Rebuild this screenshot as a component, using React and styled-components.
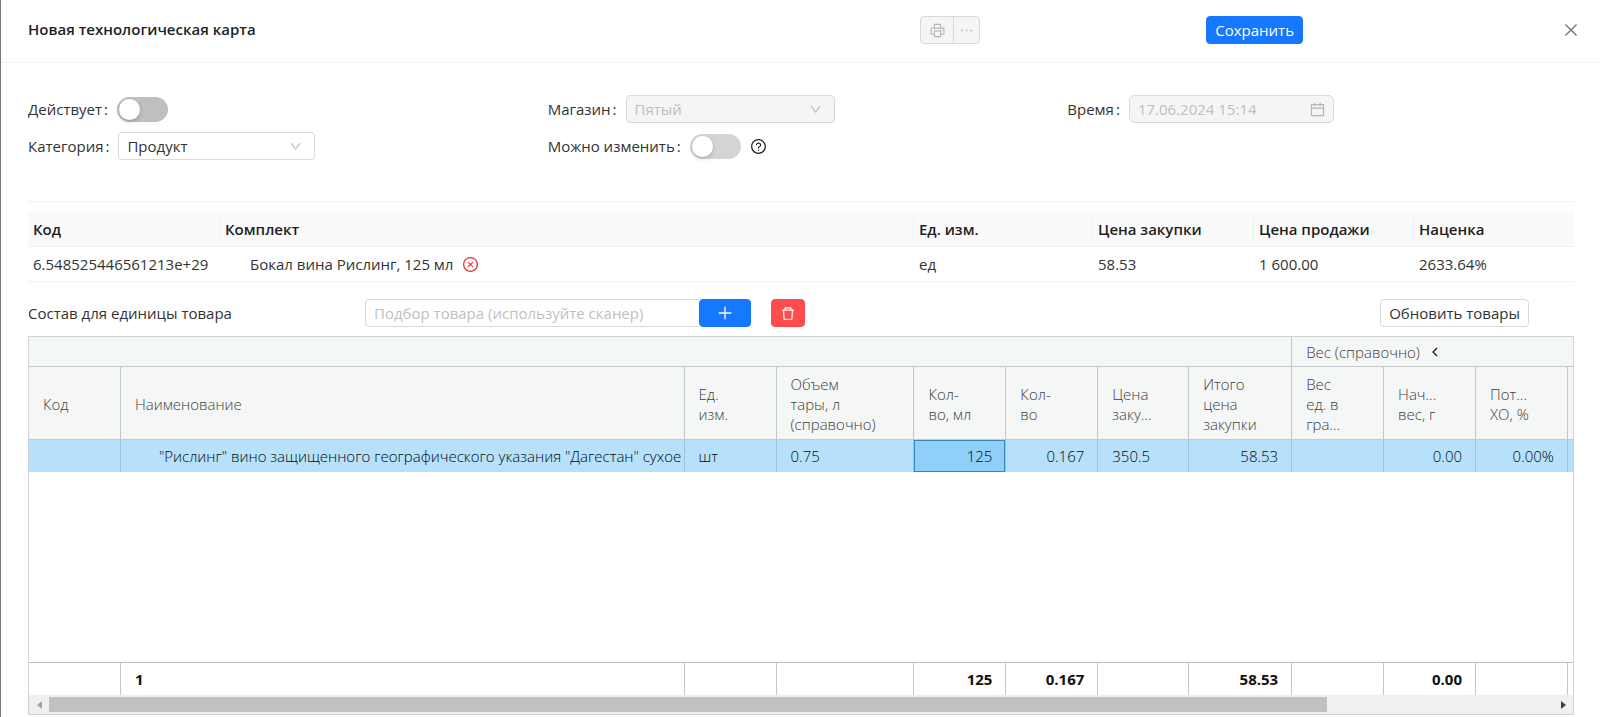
import React, { useState } from "react";
import styled, { createGlobalStyle } from "styled-components";
import {
  AiOutlineCalendar,
  AiOutlineClose,
  AiOutlineCloseCircle,
  AiOutlineDelete,
  AiOutlineDown,
  AiOutlineEllipsis,
  AiOutlinePlus,
  AiOutlinePrinter,
  AiOutlineQuestionCircle,
} from "react-icons/ai";

const GlobalStyle = createGlobalStyle`
  * {
    box-sizing: border-box;
  }
  body {
    margin: 0;
    background: #fff;
    color: #333;
    font-family: "Open Sans", "Noto Sans", sans-serif;
    font-size: 15px;
    line-height: 22px;
  }
  button,
  input,
  select {
    font: inherit;
    color: inherit;
    margin: 0;
  }
`;

const Drawer = styled.div`
  min-height: 100vh;
  border-left: 1px solid #777;
`;

const Header = styled.header`
  display: grid;
  grid-template-columns: 893fr 286fr 356fr auto;
  align-items: center;
  height: 63px;
  padding: 0 20px 2px 27px;
  border-bottom: 1px solid #f2f2f2;
`;

const Title = styled.h1`
  margin: 0;
  padding-bottom: 2px;
  color: #1f1f1f;
  font-size: 15px;
  font-weight: 600;
  line-height: 22px;
`;

const ButtonGroup = styled.div`
  display: flex;
`;

const ToolButton = styled.button`
  display: flex;
  align-items: center;
  justify-content: center;
  width: ${({ $width }) => $width}px;
  height: 28px;
  padding: 0;
  border: 1px solid #d9d9d9;
  background: #f5f5f5;
  color: #b8b8b8;
  font-size: 17px;

  &:first-child {
    border-radius: 4px 0 0 4px;
  }
  &:last-child {
    margin-left: -1px;
    border-radius: 0 4px 4px 0;
  }
`;

const Button = styled.button`
  display: inline-flex;
  align-items: center;
  justify-content: center;
  height: 28px;
  padding: 0 8px;
  border: 1px solid #d9d9d9;
  border-radius: 4px;
  background: #fff;
  white-space: nowrap;
  cursor: pointer;
`;

const PrimaryButton = styled(Button)`
  justify-self: start;
  border-color: #1677ff;
  background: #1677ff;
  color: #fff;
`;

const CloseButton = styled.button`
  display: flex;
  padding: 0;
  border: 0;
  background: none;
  color: #7a7a7a;
  font-size: 18px;
  cursor: pointer;
`;

const Body = styled.main`
  padding: 0 26px 0 27px;
`;

const Form = styled.form`
  display: grid;
  grid-template-columns: repeat(3, 1fr);
  row-gap: 9px;
  margin-right: -13px;
  padding: 32px 0 41px;
`;

const Field = styled.div`
  display: flex;
  align-items: center;
  grid-column: ${({ $column }) => $column};
  height: 28px;
`;

const Label = styled.label`
  margin-right: 9px;
  white-space: nowrap;

  &::after {
    content: ":";
    margin-left: 2px;
  }
`;

const Switch = styled.input`
  appearance: none;
  width: 51px;
  height: 25px;
  padding: 2px;
  border-radius: 13px;
  background: ${({ disabled }) => (disabled ? "#d4d4d4" : "#bfbfbf")};

  &::before {
    content: "";
    display: block;
    width: 21px;
    height: 21px;
    border-radius: 50%;
    background: #fff;
    box-shadow: 0 2px 4px rgba(0, 35, 11, 0.2);
  }
  &:checked {
    background: #1677ff;
  }
  &:checked::before {
    margin-left: auto;
  }
`;

const Hint = styled.span`
  display: flex;
  margin-left: 9px;
  color: #1f1f1f;
  font-size: 17px;
`;

const ControlBox = styled.div`
  display: flex;
  align-items: center;
  position: relative;
  width: ${({ $width }) => $width}px;

  svg {
    position: absolute;
    right: ${({ $inset }) => $inset || 13}px;
    color: #b5b5b5;
    font-size: ${({ $icon }) => $icon || 13}px;
    pointer-events: none;
  }
`;

const control = `
  width: 100%;
  height: 28px;
  padding: 0 8px;
  border: 1px solid #d9d9d9;
  border-radius: 4px;
  background: #fff;
  outline: none;
  opacity: 1;

  &:disabled {
    background: #f5f5f5;
    color: #bfbfbf;
  }
  &::placeholder {
    color: #bfbfbf;
  }
`;

const Select = styled.select`
  appearance: none;
  ${control}
`;

const DateInput = styled.input`
  ${control}
  border-radius: 6px;
`;

const Summary = styled.div`
  padding-top: 9px;
  border-top: 1px solid #f0f0f0;
`;

const SummaryTable = styled.table`
  width: 100%;
  table-layout: fixed;
  border-spacing: 0;
  text-align: left;

  th,
  td {
    height: 36px;
    padding: 0 5px;
    border-bottom: 1px solid #f0f0f0;
    white-space: nowrap;
  }
  td {
    height: 35px;
  }
  th {
    background: linear-gradient(#f0f0f0, #f0f0f0) right center / 1px 24px
      no-repeat #fafafa;
    color: #1f1f1f;
    font-weight: 600;
  }
  th:last-child {
    background: #fafafa;
  }
`;

const KitName = styled.div`
  display: flex;
  align-items: center;
  gap: 9px;
  padding-left: 25px;
`;

const RemoveButton = styled.button`
  display: flex;
  padding: 0;
  border: 0;
  background: none;
  color: #d9363e;
  font-size: 17px;
  cursor: pointer;
`;

const Toolbar = styled.div`
  display: flex;
  align-items: center;
  padding: 17px 45px 9px 0;
`;

const ToolbarTitle = styled.label`
  flex: 0 0 337px;
`;

const SearchInput = styled.input`
  ${control}
  width: 334px;
  border-radius: 4px 0 0 4px;
  border-right: 0;
`;

const AddButton = styled(PrimaryButton)`
  width: 52px;
  font-size: 18px;
`;

const DeleteButton = styled(Button)`
  width: 34px;
  margin: 0 auto 0 20px;
  border-color: #ff4d4f;
  background: #ff4d4f;
  color: #fff;
  font-size: 17px;
`;

const Grid = styled.div`
  border: 1px solid #cfd3d3;
  overflow: hidden;
`;

const GridTable = styled.table`
  width: 100%;
  table-layout: fixed;
  border-spacing: 0;
  font-size: 15px;
  font-weight: 300;
  line-height: 20px;

  th,
  td {
    padding: 0 13px 0 14px;
    border-right: 1px solid #c4c8ca;
    text-align: left;
    white-space: nowrap;
    overflow: hidden;
  }
  tr > :last-child {
    border-right: 0;
  }
  thead th {
    height: 73px;
    padding-top: 2px;
    border-bottom: 1px solid #c4c8ca;
    background: #f5f7f7;
    color: #3c3e40;
    font-weight: 300;
  }
`;

const GroupRow = styled.tr`
  && th {
    height: 30px;
    padding-top: 0;
  }
`;

const GroupTitle = styled.div`
  display: flex;
  align-items: center;
  gap: 12px;
`;

const CollapseButton = styled.button`
  display: flex;
  padding: 0;
  border: 0;
  background: none;
  color: #222;
`;

const DataRow = styled.tr`
  background: #b7e1fa;
  color: #000a14;

  && td {
    height: 32px;
    border-color: #9dc4db;
  }
`;

const Cell = styled.td`
  && {
    text-align: ${({ $right }) => ($right ? "right" : "left")};
    ${({ $nested }) => $nested && "padding: 0 4px 0 38px;"}
    ${({ $active }) =>
      $active &&
      `background: #90cff8;
       box-shadow: inset 0 0 0 1px #3585ba;`}
  }
`;

const EmptyRow = styled.tr`
  && td {
    height: 190px;
    border-right: 0;
  }
`;

const FooterRow = styled.tr`
  color: #111;

  && td {
    height: 33px;
    border-top: 1px solid #bdbdbd;
    font-weight: 700;
  }
`;

const Scrollbar = styled.div`
  display: flex;
  align-items: center;
  height: 19px;
  background: #f0f0f0;
`;

const ScrollButton = styled.button`
  display: flex;
  align-items: center;
  justify-content: center;
  width: 20px;
  height: 19px;
  padding: 0;
  border: 0;
  background: none;
  color: ${({ disabled }) => (disabled ? "#a3a3a3" : "#404040")};
`;

const ScrollTrack = styled.div`
  flex: 1;
`;

const ScrollThumb = styled.div`
  width: 85%;
  height: 15px;
  background: #c1c1c1;
`;

const summaryColumns = [
  { title: "Код", width: 192 },
  { title: "Комплект", width: 694 },
  { title: "Ед. изм.", width: 179 },
  { title: "Цена закупки", width: 161 },
  { title: "Цена продажи", width: 160 },
  { title: "Наценка", width: 160 },
];

const gridColumns = [
  { title: ["Код"], width: 92, value: "", total: "" },
  {
    title: ["Наименование"],
    width: 564,
    value:
      '"Рислинг" вино защищенного географического указания "Дагестан" сухое',
    total: "1",
    nested: true,
  },
  { title: ["Ед.", "изм."], width: 92, value: "шт", total: "" },
  {
    title: ["Объем", "тары, л", "(справочно)"],
    width: 138,
    value: "0.75",
    total: "",
  },
  {
    title: ["Кол-", "во, мл"],
    width: 92,
    value: "125",
    total: "125",
    right: true,
    active: true,
  },
  {
    title: ["Кол-", "во"],
    width: 92,
    value: "0.167",
    total: "0.167",
    right: true,
  },
  { title: ["Цена", "заку..."], width: 91, value: "350.5", total: "" },
  {
    title: ["Итого", "цена", "закупки"],
    width: 103,
    value: "58.53",
    total: "58.53",
    right: true,
  },
  { title: ["Вес", "ед. в", "гра..."], width: 92, value: "", total: "" },
  {
    title: ["Нач...", "вес, г"],
    width: 92,
    value: "0.00",
    total: "0.00",
    right: true,
  },
  {
    title: ["Пот...", "ХО, %"],
    width: 92,
    value: "0.00%",
    total: "",
    right: true,
  },
  { title: [], width: 5, value: "", total: "" },
];

const Columns = ({ columns }) => {
  const total = columns.reduce((sum, item) => sum + item.width, 0);
  return (
    <colgroup>
      {columns.map((item, idx) => (
        <col key={idx} style={{ width: `${(item.width / total) * 100}%` }} />
      ))}
    </colgroup>
  );
};

const CardForm = () => {
  const [active, setActive] = useState(false);

  return (
    <Form>
      <Field $column={1}>
        <Label htmlFor="active">Действует</Label>
        <Switch
          id="active"
          type="checkbox"
          role="switch"
          checked={active}
          onChange={() => setActive(!active)}
        />
      </Field>
      <Field $column={2}>
        <Label htmlFor="shop">Магазин</Label>
        <ControlBox $width={209}>
          <Select id="shop" disabled>
            <option>Пятый</option>
          </Select>
          <AiOutlineDown />
        </ControlBox>
      </Field>
      <Field $column={3}>
        <Label htmlFor="time">Время</Label>
        <ControlBox $width={205} $inset={8} $icon={17}>
          <DateInput id="time" value="17.06.2024 15:14" disabled readOnly />
          <AiOutlineCalendar />
        </ControlBox>
      </Field>
      <Field $column={1}>
        <Label htmlFor="category">Категория</Label>
        <ControlBox $width={197}>
          <Select id="category">
            <option>Продукт</option>
          </Select>
          <AiOutlineDown />
        </ControlBox>
      </Field>
      <Field $column={2}>
        <Label htmlFor="editable">Можно изменить</Label>
        <Switch id="editable" type="checkbox" role="switch" disabled />
        <Hint>
          <AiOutlineQuestionCircle />
        </Hint>
      </Field>
    </Form>
  );
};

const KitSummary = () => (
  <Summary>
    <SummaryTable>
      <Columns columns={summaryColumns} />
      <thead>
        <tr>
          {summaryColumns.map((item) => (
            <th key={item.title}>{item.title}</th>
          ))}
        </tr>
      </thead>
      <tbody>
        <tr>
          <td>6.548525446561213e+29</td>
          <td>
            <KitName>
              Бокал вина Рислинг, 125 мл
              <RemoveButton type="button" aria-label="Удалить">
                <AiOutlineCloseCircle />
              </RemoveButton>
            </KitName>
          </td>
          <td>ед</td>
          <td>58.53</td>
          <td>1 600.00</td>
          <td>2633.64%</td>
        </tr>
      </tbody>
    </SummaryTable>
  </Summary>
);

const CompositionGrid = () => (
  <Grid>
    <GridTable>
      <Columns columns={gridColumns} />
      <thead>
        <GroupRow>
          <th colSpan={8}></th>
          <th colSpan={4}>
            <GroupTitle>
              Вес (справочно)
              <CollapseButton type="button" aria-label="Свернуть">
                <svg width="6" height="10" viewBox="0 0 6 10" fill="none">
                  <path d="M5 1L1 5l4 4" stroke="currentColor" strokeWidth="1.4" />
                </svg>
              </CollapseButton>
            </GroupTitle>
          </th>
        </GroupRow>
        <tr>
          {gridColumns.map((item, idx) => (
            <th key={idx}>
              {item.title.map((line) => (
                <div key={line}>{line}</div>
              ))}
            </th>
          ))}
        </tr>
      </thead>
      <tbody>
        <DataRow>
          {gridColumns.map((item, idx) => (
            <Cell
              key={idx}
              $right={item.right}
              $nested={item.nested}
              $active={item.active}
            >
              {item.value}
            </Cell>
          ))}
        </DataRow>
        <EmptyRow>
          <td colSpan={12}></td>
        </EmptyRow>
      </tbody>
      <tfoot>
        <FooterRow>
          {gridColumns.map((item, idx) => (
            <Cell key={idx} $right={item.right}>
              {item.total}
            </Cell>
          ))}
        </FooterRow>
      </tfoot>
    </GridTable>
    <Scrollbar>
      <ScrollButton type="button" aria-label="Влево" disabled>
        <svg width="5" height="8" viewBox="0 0 5 8">
          <path d="M5 0v8L0 4z" fill="currentColor" />
        </svg>
      </ScrollButton>
      <ScrollTrack>
        <ScrollThumb />
      </ScrollTrack>
      <ScrollButton type="button" aria-label="Вправо">
        <svg width="5" height="8" viewBox="0 0 5 8">
          <path d="M0 0v8l5-4z" fill="currentColor" />
        </svg>
      </ScrollButton>
    </Scrollbar>
  </Grid>
);

const App = () => {
  const [search, setSearch] = useState("");

  return (
    <Drawer>
      <GlobalStyle />
      <Header>
        <Title>Новая технологическая карта</Title>
        <ButtonGroup>
          <ToolButton type="button" aria-label="Печать" $width={34} disabled>
            <AiOutlinePrinter />
          </ToolButton>
          <ToolButton type="button" aria-label="Ещё" $width={27} disabled>
            <AiOutlineEllipsis />
          </ToolButton>
        </ButtonGroup>
        <PrimaryButton type="button">Сохранить</PrimaryButton>
        <CloseButton type="button" aria-label="Закрыть">
          <AiOutlineClose />
        </CloseButton>
      </Header>
      <Body>
        <CardForm />
        <KitSummary />
        <Toolbar>
          <ToolbarTitle htmlFor="search">
            Состав для единицы товара
          </ToolbarTitle>
          <SearchInput
            id="search"
            placeholder="Подбор товара (используйте сканер)"
            value={search}
            onChange={(e) => setSearch(e.target.value)}
          />
          <AddButton type="button" aria-label="Добавить">
            <AiOutlinePlus />
          </AddButton>
          <DeleteButton type="button" aria-label="Удалить строку">
            <AiOutlineDelete />
          </DeleteButton>
          <Button type="button">Обновить товары</Button>
        </Toolbar>
        <CompositionGrid />
      </Body>
    </Drawer>
  );
};

export default App;
